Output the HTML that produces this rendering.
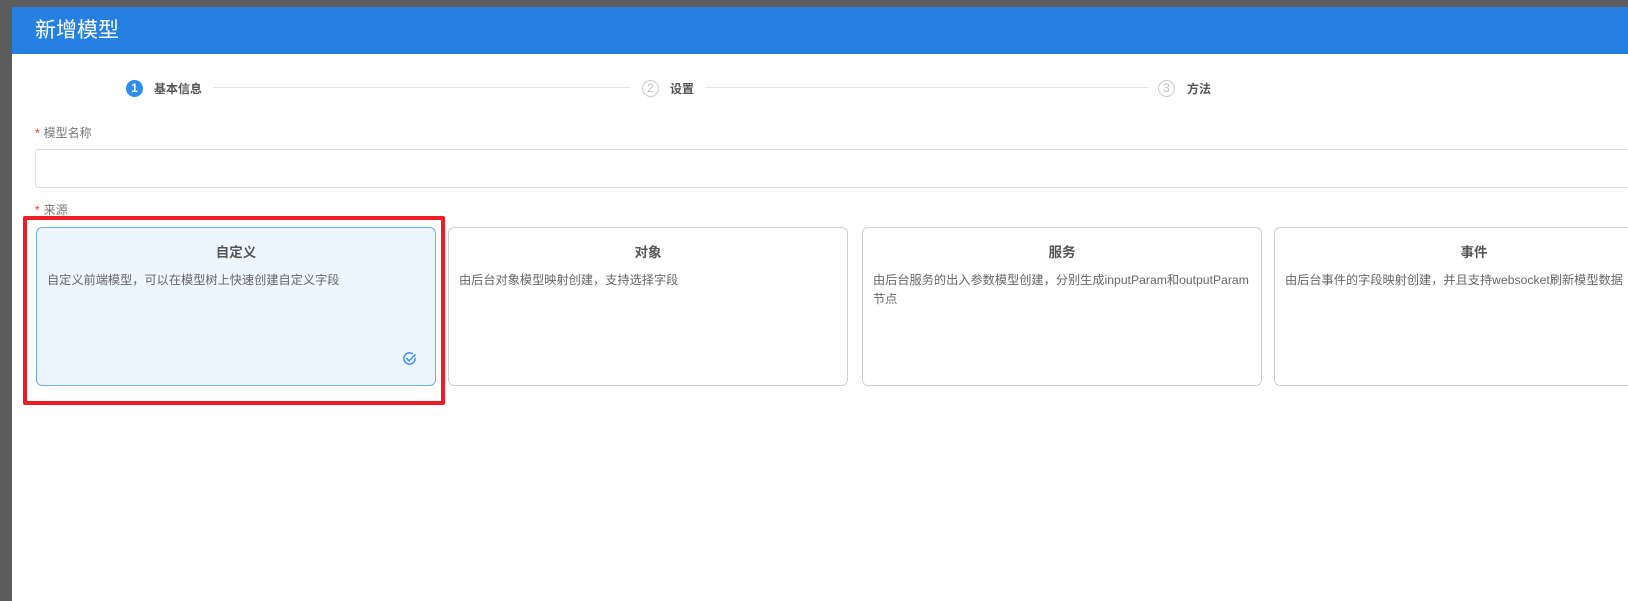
<!DOCTYPE html>
<html><head><meta charset="utf-8"><style>
*{margin:0;padding:0;box-sizing:border-box}
body{width:1628px;height:601px;overflow:hidden;background:#5d5d5d;font-family:"Liberation Sans","Noto Sans CJK SC",sans-serif;position:relative}
.dlg{position:absolute;left:12px;top:7px;right:0;bottom:0;background:#fff}
.hd{position:absolute;left:0;top:0;right:0;height:47px;background:#2680e2;color:#fff;font-size:21px;line-height:47px;padding-left:23px}
.abs{position:absolute}
.circ{position:absolute;width:17px;height:17px;border-radius:50%;font-size:12px;line-height:15px;text-align:center;border:1px solid #c9c9c9;color:#c0c0c0}
.circ.on{background:#2d8cf0;border-color:#2d8cf0;color:#fff;font-weight:bold}
.st{position:absolute;font-size:12px;color:#555;font-weight:bold}
.ln{position:absolute;height:1px;background:#e4e4e4;top:80px}
.lbl{position:absolute;font-size:12px;color:#777}
.lbl b{color:#f0341c;font-weight:normal;margin-right:4px}
.card{position:absolute;top:220px;width:400px;height:159px;border:1px solid #cfcfcf;border-radius:6px;background:#fff}
.card.sel{background:#edf5fd;border-color:#6aaef5}
.card h4{font-size:13.5px;color:#555;text-align:center;margin-top:13px;font-weight:bold}
.card p{font-size:12.2px;color:#666;line-height:19px;padding:0 8px 0 10px;margin-top:10px}
</style></head><body>
<div class="dlg">
<div class="hd">新增模型</div>
<div class="circ on" style="left:114px;top:73px">1</div><div class="st" style="left:142px;top:73px">基本信息</div>
<div class="ln" style="left:201px;width:417px"></div>
<div class="circ" style="left:630px;top:73px">2</div><div class="st" style="left:658px;top:73px">设置</div>
<div class="ln" style="left:693px;width:443px"></div>
<div class="circ" style="left:1146px;top:73px">3</div><div class="st" style="left:1175px;top:73px">方法</div>
<div class="lbl" style="left:23px;top:117px"><b>*</b>模型名称</div>
<div class="abs" style="left:23px;top:142px;right:-2px;height:39px;border:1px solid #dcdcdc;border-radius:3px"></div>
<div class="lbl" style="left:23px;top:194px"><b>*</b>来源</div>
<div class="abs" style="left:11px;top:209px;width:422px;height:189px;border:4px solid #ee1c25;border-radius:2px"></div>
<div class="card sel" style="left:24px"><h4>自定义</h4><p>自定义前端模型，可以在模型树上快速创建自定义字段</p>
<svg class="abs" style="left:365px;top:123px" width="15" height="15" viewBox="0 0 16 16" fill="none" stroke="#3d8ff0" stroke-width="1.6" stroke-linecap="round"><path d="M14 8A6 6 0 1 1 11 2.8"/><path d="M5 8l2.5 2.5L14 4"/></svg></div>
<div class="card" style="left:436px"><h4>对象</h4><p>由后台对象模型映射创建，支持选择字段</p></div>
<div class="card" style="left:850px"><h4>服务</h4><p>由后台服务的出入参数模型创建，分别生成inputParam和outputParam节点</p></div>
<div class="card" style="left:1262px"><h4>事件</h4><p>由后台事件的字段映射创建，并且支持websocket刷新模型数据</p></div>
</div>
</body></html>
